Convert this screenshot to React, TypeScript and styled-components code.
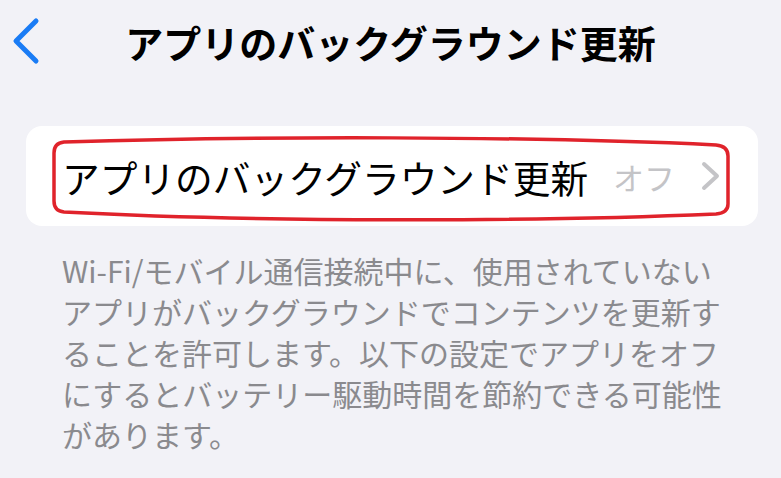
import React from "react";
import styled, { createGlobalStyle } from "styled-components";

const GlobalStyle = createGlobalStyle`
    html, body {
        margin: 0;
        padding: 0;
        background: #f2f2f7;
    }
    body {
        font-family: "Noto Sans CJK JP", "Noto Sans", sans-serif;
        -webkit-font-smoothing: antialiased;
    }
`;

const Screen = styled.div`
    width: 781px;
    height: 478px;
    overflow: hidden;
    background: #f2f2f7;
`;

const NavBar = styled.header`
    display: grid;
    grid-template-columns: 1fr auto 1fr;
    align-items: center;
    height: 82px;
`;

const BackButton = styled.button`
    justify-self: start;
    display: flex;
    align-items: center;
    margin-left: 10px;
    padding: 0;
    border: none;
    background: none;
    color: #1a7cf5;
`;

const NavTitle = styled.h1`
    margin: 0;
    font-size: 38px;
    font-weight: 700;
    letter-spacing: 0;
    color: #000;
    white-space: nowrap;
`;

const Group = styled.section`
    position: relative;
    margin: 44px 23px 0 26px;
    height: 100px;
    border-radius: 16px;
    background: #fff;
`;

const Row = styled.div`
    display: flex;
    align-items: center;
    height: 100%;
    padding: 0 37px 0 36px;
`;

const RowLabel = styled.span`
    flex: 1;
    font-size: 37.7px;
    font-weight: 400;
    color: #000;
    white-space: nowrap;
`;

const RowValue = styled.span`
    font-size: 31px;
    color: #c4c4c7;
    margin-right: 26px;
`;

const Disclosure = styled.svg`
    display: block;
`;

const Highlight = styled.svg`
    position: absolute;
    left: 26px;
    top: 11px;
    overflow: visible;
    pointer-events: none;
`;

const Footnote = styled.p`
    margin: 0;
    padding: 24px 50px 0 62px;
    font-size: 30px;
    line-height: 41px;
    color: #8a8a8e;
`;

const Line = styled.span<{ $tight?: boolean }>`
    display: block;
    white-space: nowrap;
    letter-spacing: ${(p) => (p.$tight ? "-0.2px" : "0")};
`;

const footnoteLines = [
    "Wi-Fi/モバイル通信接続中に、使用されていない",
    "アプリがバックグラウンドでコンテンツを更新す",
    "ることを許可します。以下の設定でアプリをオフ",
    "にするとバッテリー駆動時間を節約できる可能性",
    "があります。",
];

export default function App() {
    return (
        <Screen>
            <GlobalStyle />
            <NavBar>
                <BackButton aria-label="戻る">
                    <svg width="30" height="48" viewBox="0 0 30 48">
                        <path
                            d="M26 4 L6 24 L26 44"
                            fill="none"
                            stroke="currentColor"
                            strokeWidth="5"
                            strokeLinecap="round"
                            strokeLinejoin="round"
                        />
                    </svg>
                </BackButton>
                <NavTitle>アプリのバックグラウンド更新</NavTitle>
                <span />
            </NavBar>

            <Group>
                <Row>
                    <RowLabel>アプリのバックグラウンド更新</RowLabel>
                    <RowValue>オフ</RowValue>
                    <Disclosure width="20" height="30" viewBox="0 0 20 30">
                        <path
                            d="M3 3 L16 15 L3 27"
                            fill="none"
                            stroke="#c4c4c7"
                            strokeWidth="4"
                            strokeLinecap="round"
                            strokeLinejoin="round"
                        />
                    </Disclosure>
                </Row>
                {/* red marker drawn around the row */}
                <Highlight width="680" height="86" viewBox="0 0 680 86">
                    <path
                        d="M12 5 C200 -1 480 -1 664 8 Q676 9 676 19 L676 67 Q676 76 664 77 C480 85 200 85 12 75 Q2 74 2 64 L2 16 Q2 6 12 5 Z"
                        fill="none"
                        stroke="#e0232b"
                        strokeWidth="3.5"
                    />
                </Highlight>
            </Group>

            <Footnote>
                {footnoteLines.map((text, i) => (
                    <Line key={i}>{text}</Line>
                ))}
            </Footnote>
        </Screen>
    );
}
